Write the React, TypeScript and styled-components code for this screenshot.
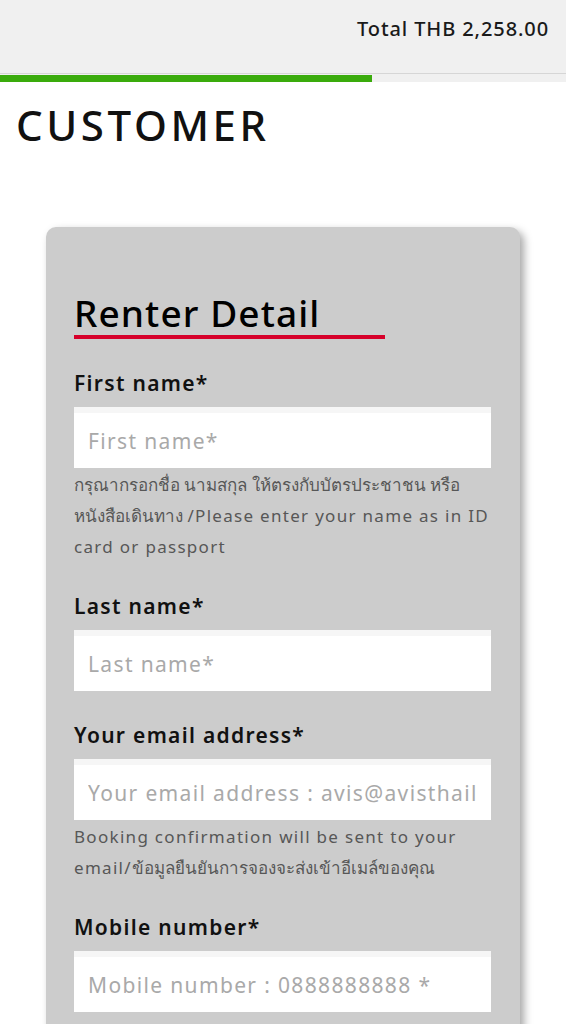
import React from 'react'
import styled, { createGlobalStyle } from 'styled-components'

const FONT = `'Noto Sans', sans-serif`

const GlobalStyle = createGlobalStyle`
  html, body {
    margin: 0;
    padding: 0;
    background: #ffffff;
  }
  body {
    font-family: ${FONT};
    color: #111111;
    overflow: hidden;
  }
  * {
    box-sizing: border-box;
  }
`

type HintPart = { thai?: boolean; text: string }

type FieldData = {
  label: string
  placeholder: string
  hint?: HintPart[]
}

const fields: FieldData[] = [
  {
    label: 'First name*',
    placeholder: 'First name*',
    hint: [
      { thai: true, text: 'กรุณากรอกชื่อ นามสกุล ให้ตรงกับบัตรประชาชน หรือหนังสือเดินทาง ' },
      { text: '/Please enter your name as in ID card or passport' },
    ],
  },
  { label: 'Last name*', placeholder: 'Last name*' },
  {
    label: 'Your email address*',
    placeholder: 'Your email address : avis@avisthailand.com *',
    hint: [
      { text: 'Booking confirmation will be sent to your email/' },
      { thai: true, text: 'ข้อมูลยืนยันการจองจะส่งเข้าอีเมล์ของคุณ' },
    ],
  },
  { label: 'Mobile number*', placeholder: 'Mobile number : 0888888888 *' },
]

const App = () => {
  return (
    <Page>
      <GlobalStyle />
      <TopBar>
        <Total>Total THB 2,258.00</Total>
      </TopBar>
      <Progress>
        <ProgressFill style={{ width: `${(372 / 566) * 100}%` }} />
      </Progress>
      <PageTitle>CUSTOMER</PageTitle>
      <Card>
        <CardTitle>Renter Detail</CardTitle>
        {fields.map((field) => (
          <Field key={field.label}>
            <Label>{field.label}</Label>
            <Input placeholder={field.placeholder} />
            {field.hint && (
              <Hint>
                {field.hint.map((part) => (
                  <HintText key={part.text} $thai={part.thai}>
                    {part.text}
                  </HintText>
                ))}
              </Hint>
            )}
          </Field>
        ))}
      </Card>
    </Page>
  )
}

export default App

const Page = styled.div`
  display: flex;
  flex-direction: column;
  width: 566px;
  min-height: 1024px;
`

const TopBar = styled.div`
  display: flex;
  justify-content: flex-end;
  align-items: flex-start;
  height: 74px;
  padding: 17px 17px 0;
  background-color: #f0f0f0;
  border-bottom: 1px solid #d6d6d6;
`

const Total = styled.div`
  font-size: 20px;
  font-weight: 500;
  line-height: 24px;
  letter-spacing: 0.9px;
  color: #1a1a1a;
`

const Progress = styled.div`
  height: 8px;
  padding-top: 1px;
  background-color: #f0f0f0;
`

const ProgressFill = styled.div`
  height: 100%;
  background-color: #3aab0c;
`

const PageTitle = styled.h1`
  margin: 17px 0 0 16px;
  font-size: 42px;
  font-weight: 500;
  line-height: 52px;
  letter-spacing: 3.6px;
  color: #111111;
`

const Card = styled.div`
  display: flex;
  flex-direction: column;
  gap: 30px;
  margin: 76px 46px 0;
  padding: 64px 29px 40px 28px;
  border-radius: 10px;
  background-color: #cccccc;
  box-shadow: 4px 4px 8px rgba(0, 0, 0, 0.35);
`

const CardTitle = styled.h2`
  align-self: flex-start;
  margin: 0;
  padding-right: 65px;
  font-size: 37px;
  font-weight: 500;
  line-height: 44px;
  letter-spacing: 1.1px;
  color: #000000;
  border-bottom: 4px solid #d6002a;
`

const Field = styled.div`
  display: flex;
  flex-direction: column;
`

const Label = styled.label`
  margin-bottom: 10px;
  font-size: 21px;
  font-weight: 600;
  line-height: 28px;
  letter-spacing: 1.3px;
  color: #111111;
`

const Input = styled.input`
  width: 100%;
  height: 61px;
  padding: 6px 14px 0 14px;
  border: none;
  outline: none;
  background-color: #ffffff;
  box-shadow: inset 0 6px 0 #f6f6f6;
  font-family: ${FONT};
  font-size: 21px;
  letter-spacing: 1.35px;
  color: #111111;

  &::placeholder {
    color: #a9a9a9;
  }
`

const Hint = styled.p`
  margin: 1px 0 0;
  font-size: 17px;
  line-height: 31px;
  color: #575757;
`

const HintText = styled.span<{ $thai?: boolean }>`
  letter-spacing: ${({ $thai }) => ($thai ? '0' : '1.3px')};
`
